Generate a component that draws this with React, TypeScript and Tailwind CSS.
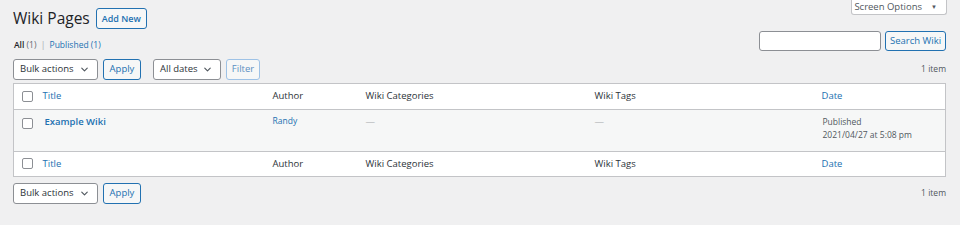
import { ChevronDown } from 'lucide-react'

function Checkbox() {
  return <span className="block w-[11px] h-[11px] rounded-[2px] border border-[#8c8f94] bg-white" />
}

function Select({ label, width }: { label: string; width: string }) {
  return (
    <div className={`${width} h-[21px] flex items-center justify-between pl-[6px] pr-[7px] bg-white border border-[#8c8f94] rounded-[3px] text-[#2c3338] whitespace-nowrap`}>
      <span>{label}</span>
      <ChevronDown className="w-[11px] h-[11px] text-[#50575e]" strokeWidth={2.5} />
    </div>
  )
}

function Button({ label, light, width }: { label: string; light?: boolean; width: string }) {
  return (
    <div
      className={`${width} h-[21px] flex items-center justify-center rounded-[3px] border bg-[#f6f7f7] whitespace-nowrap ${
        light ? 'border-[#9ec2e6] text-[#5b8fc2]' : 'border-[#2271b1] text-[#2271b1]'
      }`}
    >
      {label}
    </div>
  )
}

function HeadRow({ top }: { top?: boolean }) {
  return (
    <tr className={top ? 'h-[26px] border-b border-[#c3c4c7]' : 'h-[25px] border-t border-[#c3c4c7]'}>
      <td className="pl-[8px]"><Checkbox /></td>
      <td className="pl-[7px] text-[#2271b1]">Title</td>
      <td className="pl-[8px]">Author</td>
      <td className="pl-[8px]">Wiki Categories</td>
      <td className="pl-[8px]">Wiki Tags</td>
      <td className="pl-[8px] text-[#2271b1]">Date</td>
    </tr>
  )
}

export default function App() {
  return (
    <div className="w-[960px] h-[225px] bg-[#f0f0f1] text-[#2c3338] text-[9.5px] overflow-hidden" style={{ fontFamily: '"Open Sans", "Noto Sans", sans-serif' }}>
      <div className="pl-[13px] pr-[14px] relative">
        {/* Screen Options tab */}
        <div className="absolute right-[13px] top-0 h-[15px] w-[96px] flex items-center justify-end gap-[9px] pr-[9px] bg-white border border-t-0 border-[#c3c4c7] rounded-b-[3px] text-[#50575e] whitespace-nowrap">
          Screen Options
          <span className="text-[6px]">▼</span>
        </div>

        <div className="flex items-center gap-[6px] pt-[8px] h-[29px]">
          <h1 className="text-[15.5px] leading-none text-[#1d2327]">Wiki Pages</h1>
          <div className="h-[21px] flex items-center px-[5px] border border-[#2271b1] rounded-[3px] bg-[#f6f7f7] text-[#2271b1] font-semibold text-[9px]">Add New</div>
        </div>

        <div className="flex items-start justify-between mt-[2px]">
          <div className="pt-[8px] pl-[1px] text-[8.5px] text-[#646970]">
            <span className="text-[#1d2327] font-semibold">All</span> (1) <span className="text-[#a7aaad] mx-[2px]">|</span>{' '}
            <span className="text-[#2271b1]">Published (1)</span>
          </div>
          <div className="flex items-center gap-[4px]">
            <div className="w-[122px] h-[20px] bg-white border border-[#8c8f94] rounded-[3px]" />
            <Button label="Search Wiki" width="w-[61px] !h-[20px]" />
          </div>
        </div>

        <div className="flex items-center justify-between mt-[7px] h-[21px]">
          <div className="flex items-center">
            <Select label="Bulk actions" width="w-[85px]" />
            <div className="ml-[5px]"><Button label="Apply" width="w-[38px]" /></div>
            <div className="ml-[12px]"><Select label="All dates" width="w-[68px]" /></div>
            <div className="ml-[5px]"><Button label="Filter" light width="w-[34px]" /></div>
          </div>
          <span className="text-[#50575e] text-[8.5px]">1 item</span>
        </div>

        <table className="w-full table-fixed mt-[3px] bg-white border border-[#c3c4c7] border-collapse text-[#2c3338]">
          <colgroup>
            <col className="w-[22px]" />
            <col className="w-[229px]" />
            <col className="w-[93px]" />
            <col className="w-[229px]" />
            <col className="w-[227px]" />
            <col />
          </colgroup>
          <thead>
            <HeadRow top />
          </thead>
          <tbody>
            <tr className="h-[42px] bg-[#f6f7f7] align-top">
              <td className="pl-[8px] pt-[8px]"><Checkbox /></td>
              <td className="pl-[9px] pt-[5px] text-[#2271b1] font-semibold">Example Wiki</td>
              <td className="pl-[8px] pt-[5px] text-[#2271b1] text-[8.5px]">Randy</td>
              <td className="pl-[8px] pt-[5px] text-[#a7aaad]">—</td>
              <td className="pl-[8px] pt-[5px] text-[#a7aaad]">—</td>
              <td className="pl-[9px] pt-[5px] text-[#50575e] text-[8.5px] leading-[13px]">
                Published
                <br />
                2021/04/27 at 5:08 pm
              </td>
            </tr>
          </tbody>
          <tfoot>
            <HeadRow />
          </tfoot>
        </table>

        <div className="flex items-center justify-between mt-[6px] h-[21px]">
          <div className="flex items-center">
            <Select label="Bulk actions" width="w-[85px]" />
            <div className="ml-[5px]"><Button label="Apply" width="w-[38px]" /></div>
          </div>
          <span className="text-[#50575e] text-[8.5px]">1 item</span>
        </div>
      </div>
    </div>
  )
}
